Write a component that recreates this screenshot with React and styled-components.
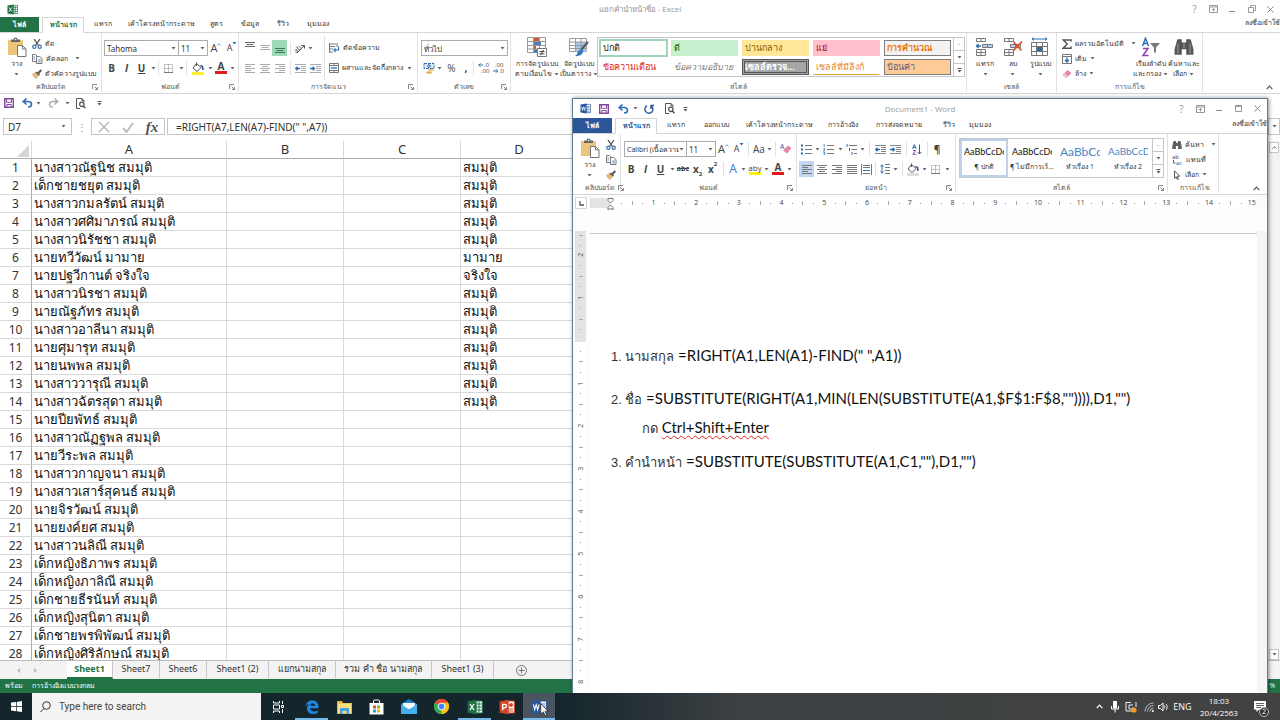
import React from 'react';
import styled, { createGlobalStyle, css } from 'styled-components';

const GlobalStyle = createGlobalStyle`
  * { box-sizing: border-box; }
  html, body { margin: 0; height: 100%; }
  body { font-family: "Open Sans", "Noto Sans", sans-serif; font-size: 7px; color: #333; background: #fff; overflow: hidden; }
  button, input, select { font: inherit; color: inherit; margin: 0; padding: 0; border: 0; background: none; outline: 0; }
  svg { display: block; flex: none; }
`;

const EXCEL = '#217346';
const WORD = '#2b579a';

/* ---------- icons ---------- */

const Svg = ({ w = 12, h = w, vw = w, vh = h, children }) => (
  <svg width={w} height={h} viewBox={`0 0 ${vw} ${vh}`} fill="none" stroke="#555" strokeWidth="1" aria-hidden="true">
    {children}
  </svg>
);

const Caret = ({ c = '#666' }) => (
  <svg width="5" height="3" viewBox="0 0 5 3" aria-hidden="true"><path d="M.5 0h4L2.5 2.6z" fill={c} /></svg>
);

const SaveIcon = () => (
  <Svg w={10}><path d="M.7.7h8.6v8.6H.7z" stroke="#80489f" strokeWidth="1.4" /><path d="M2.5 1v3.3h5V1M2.8 9V6.5h4.4V9" stroke="#80489f" /></Svg>
);
const UndoIcon = ({ c = '#2b6cb0' }) => (
  <Svg w={11} h={10}><path d="M4.5.5L1.2 3.5l3.3 3M1.5 3.5h4.7c2.2 0 3.3 1.2 3.3 2.8 0 1.500-1.200 2.700-3.500 2.700" stroke={c} strokeWidth="1.6" /></Svg>
);
const RedoIcon = ({ c = '#aaa' }) => (
  <Svg w={11} h={10}><path d="M6.500.5l3.300 3-3.300 3M9.500 3.500H4.800C2.600 3.500 1.500 4.700 1.500 6.300 1.500 7.800 2.700 9 5 9" stroke={c} strokeWidth="1.4" /></Svg>
);
const RepeatIcon = () => (
  <Svg w={10}><path d="M7.200 1.900A4 4 0 1 1 3 1.700M7 5V1.500h3" stroke="#2b579a" strokeWidth="1.400" /></Svg>
);
const PreviewIcon = () => (
  <Svg w={10} h={11}><path d="M4 10.500H.5V.5h5.500l2 2V4M6 .5v2.200h2" /><circle cx="5.800" cy="6.300" r="2.200" strokeWidth="1.300" /><path d="M7.400 8l2 2.300" strokeWidth="1.500" /></Svg>
);
const CustomizeIcon = () => (
  <Svg w={5} h={6}><path d="M.5 1.500h4" /><path d="M.5 3h4L2.500 5.500z" fill="#555" stroke="none" /></Svg>
);
const ExcelLogo = ({ s = 11 }) => (
  <Svg w={s} vw={24} vh={24}>
    <path d="M13 3h10v18H13z" fill="#fff" stroke="#217346" strokeWidth="1.500" />
    <path d="M14 7.500h8M14 12h8M14 16.500h8M18 4v16" stroke="#217346" strokeWidth="1.500" />
    <path d="M1 3.500L14.500 1v22L1 20.500z" fill="#217346" stroke="none" />
    <path d="M4.500 7.500l6 9M10.500 7.500l-6 9" stroke="#fff" strokeWidth="2" />
  </Svg>
);
const WordLogo = ({ s = 11 }) => (
  <Svg w={s} vw={24} vh={24}>
    <path d="M13 3h10v18H13z" fill="#fff" stroke="#2b579a" strokeWidth="1.500" />
    <path d="M14 7.500h7M14 11h7M14 14.500h7M14 18h7" stroke="#2b579a" strokeWidth="1.300" />
    <path d="M1 3.500L14.500 1v22L1 20.500z" fill="#2b579a" stroke="none" />
    <path d="M3.500 8l2 8 2.300-7.500L10 16l2-8" stroke="#fff" strokeWidth="1.700" />
  </Svg>
);
const PptLogo = ({ s = 18 }) => (
  <Svg w={s} vw={24} vh={24}>
    <path d="M13 3h10v18H13z" fill="#fff" stroke="#d24726" strokeWidth="1.500" />
    <circle cx="18" cy="9" r="3" fill="#d24726" stroke="none" /><path d="M14 15h7M14 18h7" stroke="#d24726" strokeWidth="1.500" />
    <path d="M1 3.500L14.500 1v22L1 20.500z" fill="#d24726" stroke="none" />
    <path d="M5.500 17V8h3a2.500 2.500 0 0 1 0 5.300h-3" stroke="#fff" strokeWidth="2" />
  </Svg>
);
const PasteIcon = () => (
  <Svg w={20} h={20}>
    <path d="M1 3h15v15H1z" fill="#ecc57b" stroke="none" />
    <path d="M4 5V2.500h2.500a2 2 0 0 1 4 0H13V5z" fill="#666" stroke="none" /><circle cx="8.500" cy="2.500" r=".8" fill="#fff" stroke="none" />
    <path d="M10.500 8.500h5l3.500 3.500v7.500h-8.500z" fill="#fff" stroke="#777" /><path d="M15.500 8.500V12H19" stroke="#777" />
  </Svg>
);
const CutIcon = () => (
  <Svg w={10}><path d="M2 0l4.500 6.500M8 0L3.500 6.500" stroke="#555" strokeWidth="1.300" /><circle cx="2.300" cy="7.800" r="1.600" stroke="#3a6ea5" strokeWidth="1.200" /><circle cx="7.700" cy="7.800" r="1.600" stroke="#3a6ea5" strokeWidth="1.200" /></Svg>
);
const CopyIcon = () => (
  <Svg w={11} h={10}><path d="M.5.5h3l2 2v5h-5z" fill="#fff" stroke="#777" /><path d="M4.500 2.500h3l2.500 2v5H4.500z" fill="#fff" stroke="#777" /><path d="M6 6h2.800M6 7.800h2.800M1.500 3h1.500M1.500 5h1.500" stroke="#3a6ea5" strokeWidth=".8" /></Svg>
);
const BrushIcon = () => (
  <Svg w={10}><path d="M0 5l4-2 3 3.500-3 3.500C2.500 9 1 7.500 0 5z" fill="#e3b873" stroke="none" /><path d="M3.500 3.500l3.500 3.300 1-1.300-3-3z" fill="#555" stroke="none" /><path d="M6.500 4L9.300 1" strokeWidth="2" /></Svg>
);
const BordersIcon = () => (
  <Svg w={9}><path d="M.5.5h8v8h-8zM4.500.5v8M.5 4.500h8" stroke="#888" strokeDasharray="1 1" /><path d="M0 8.500h9" stroke="#777" /></Svg>
);
const FillIcon = ({ bar = '#ffef33' }) => (
  <Svg w={12} h={13}><path d="M4.500 1.500l4.700 4L5 9.500 1 6z" fill="#fff" /><path d="M4.500 4V.5" /><path d="M8.500 3.500c2 0 2.500 1.500 2.300 4.500" stroke="#2b579a" strokeWidth="1.600" /><path d="M0 10h12v3H0z" fill={bar} stroke="none" /></Svg>
);
const lineSets = {
  left: [10, 6, 10, 6, 10], center: [10, 6, 10, 6, 10], right: [10, 6, 10, 6, 10], justify: [10, 10, 10, 10, 10],
};
const AlignIcon = ({ k = 'left', c = '#777' }) => (
  <Svg w={10} h={9}>{lineSets[k].map((n, i) => {
    const x = k === 'right' ? 10 - n : k === 'center' ? (10 - n) / 2 : 0;
    return <path key={i} d={`M${x} ${i * 2 + 0.5}h${n}`} stroke={c} />;
  })}</Svg>
);
const VAlignIcon = ({ at = 0, c = '#666' }) => (
  <Svg w={10} h={12}><path d={`M0 ${at + 0.5}h10M1.500 ${at + 2.5}h7M0 ${at + 4.5}h10`} stroke={c} /></Svg>
);
const OrientIcon = () => (
  <Svg w={12}><text x="-1" y="8" fontSize="7" fill="#444" stroke="none" transform="rotate(-45 5 6)">ab</text><path d="M3 11l7-7M10.500 6.500V3.500H7.500" /></Svg>
);
const IndentIcon = ({ out, c = '#888' }) => (
  <Svg w={11} h={9}><path d="M0 .5h11M6 2.500h5M6 4.500h5M6 6.500h5M0 8.500h11" stroke={c} /><path d={out ? 'M5 4.500H.8M2.500 2.700L.7 4.500l1.800 1.800' : 'M0 4.500h4.200M2.700 2.700l1.800 1.800-1.800 1.800'} stroke="#2b6cb0" strokeWidth="1.300" /></Svg>
);
const WrapIcon = () => (
  <Svg w={11} h={10}><path d="M.5 0v10M8 0v4M1 1h6M1 3.500h5M1 6h3M1 9h3" stroke="#777" /><path d="M5 7h4.500V3.500M6.500 5.300L5 7l1.500 1.800" stroke="#2b6cb0" strokeWidth="1.200" /></Svg>
);
const MergeIcon = () => (
  <Svg w={10}><path d="M.5.5h9v9h-9zM.5 2.500h9M.5 7.500h9M5 0v2.500M5 7.500v2.500" stroke="#777" /><path d="M2 5h6" stroke="#2b6cb0" strokeWidth="1.300" /></Svg>
);
const CurrencyIcon = () => (
  <Svg w={12}><path d="M1 1.500h10v5H1z" stroke="#2b6cb0" fill="#dce9f7" strokeDasharray="3 1" /><circle cx="6" cy="4" r="1.300" stroke="#2b6cb0" /><ellipse cx="8" cy="8" rx="3" ry="1.300" fill="#ecc57b" stroke="none" /><ellipse cx="6" cy="10.500" rx="3" ry="1.200" fill="#e0ac62" stroke="none" /></Svg>
);
const DecimalIcon = ({ more }) => (
  <Svg w={12}><text x={more ? 6 : 2} y="5" fontSize="6" fill="#444" stroke="none">{more ? '.0' : '.00'}</text><text x={more ? 3 : 6} y="11" fontSize="6" fill="#444" stroke="none">{more ? '.00' : '.0'}</text><path d={more ? 'M5 3H.8M2.500 1.300L.8 3l1.700 1.700' : 'M0 9h4.500M3 7.300L4.700 9 3 10.700'} stroke="#2b6cb0" /></Svg>
);
const CondIcon = () => (
  <Svg w={20} h={20}><path d="M.5.5h18v15H.5z" fill="#fff" stroke="#999" /><path d="M6.500.5v15M12.500.5v15M.5 4.500h18M.5 8.500h18M.5 12h18" stroke="#999" /><path d="M7 1h5v3H7zM7 9h2v3H7z" fill="#d9583b" stroke="none" /><path d="M7 5h7v3H7zM7 12.500h4v3H7z" fill="#4a7ebb" stroke="none" /><path d="M10.500 11.500h9v8h-9z" fill="#fff" stroke="#777" /><path d="M12.500 14.500h5M12.500 16.800h5M16.500 13l-3 5.300" stroke="#444" /></Svg>
);
const TableFmtIcon = () => (
  <Svg w={20} h={20}><path d="M.5 1.500h17v13H.5z" fill="#fff" stroke="#999" /><path d="M6.500 5h11v9.500h-11z" fill="#a9c9ea" stroke="none" /><path d="M6.500 1.500v13M12 1.500v13M.5 5h17M.5 8.500h17M.5 11.500h17" stroke="#999" /><path d="M19 5l-7 8" stroke="#555" strokeWidth="2" /><path d="M12.500 11.500l-4 3.500c0 2-1 3-2.500 4 3.500.6 7-.5 8.500-5z" fill="#3a78b8" stroke="none" /></Svg>
);
const CellsIcon = ({ k }) => (
  <Svg w={20} h={20}>
    {k === 'format' ? (
      <><path d="M1.500 5.500h16v13h-16z" fill="#fff" stroke="#777" /><path d="M6.500 5v14M12.500 5v14M1 9.500h17M1 14.500h17" stroke="#777" /><path d="M7 10h5v4H7z" fill="#2b6cb0" stroke="none" /><path d="M2 2h15M4 .5L2 2l2 1.500M15 .5L17 2l-2 1.500" stroke="#2b6cb0" /></>
    ) : (
      <><path d="M1.500 1.500h9v3h-9zM6 1.500v3M1.500 12.500h9v6h-9zM6 12.500v6M1.500 15.500h9" stroke="#777" /><path d="M7.500 7.500h10v3h-10zM12.500 7.500v3" fill="#b9d3ee" stroke="#777" /></>
    )}
    {k === 'insert' && <path d="M6 9H1.500M3.500 7L1.500 9l2 2" stroke="#2b6cb0" strokeWidth="1.400" />}
    {k === 'delete' && <path d="M10.500 5l8 8.500M19 4.500l-9 9.500" stroke="#d9532c" strokeWidth="1.800" />}
  </Svg>
);
const SumIcon = () => <Svg w={10}><path d="M9 2.500V1H1.200l4 4-4 4.200H9V7.500" strokeWidth="1.500" /></Svg>;
const FillDownIcon = () => <Svg w={10}><path d="M.5.5h9v9h-9zM.5 2.500h9" stroke="#777" /><path d="M5 3.500v4M3 6l2 2 2-2" stroke="#2b6cb0" strokeWidth="1.400" /></Svg>;
const EraserIcon = () => <Svg w={10}><path d="M5.500 1l4 3-5 5-4-3z" fill="#e8869d" stroke="none" /><path d="M2.500 4l4 3-2 2-4-3z" fill="#f3bdc9" stroke="none" /></Svg>;
const SortFilterIcon = () => (
  <Svg w={20} h={20}><path d="M1.500 9L4.500 1.200 7.500 9M2.500 6.500h4" stroke="#2b6cb0" strokeWidth="1.400" /><path d="M2 11.500h5L2 18.500h5.500" stroke="#8e44ad" strokeWidth="1.500" /><path d="M9 6h10l-4 4.500V15l-2 1v-5.500z" fill="#777" stroke="none" /></Svg>
);
const BinocularsIcon = ({ s = 18 }) => (
  <Svg w={s} vw={18} vh={18}><path d="M3 2h4v3h4V2h4l2.500 9v5H11v-5H7v5H.5v-5z" fill="#555" stroke="none" /><path d="M3.500 6v9M14.500 6v9M9 6v4" stroke="#999" /></Svg>
);
const ClearFmtIcon = () => <Svg w={12}><text x="0" y="6" fontSize="7" fill="#2b579a" stroke="none">A</text><path d="M8 2.500L11.500 5 7 10.500 3 7.500z" fill="#e8869d" stroke="none" /></Svg>;
const ListIcon = ({ k }) => (
  <Svg w={11} h={11}>
    {k === 'multi' ? <path d="M3 1.500h8M5.500 5.500H11M8 9.500h3" stroke="#777" /> : <path d="M4 1.500h7M4 5.500h7M4 9.500h7" stroke="#777" />}
    {k === 'bullet' && <path d="M0 1.500h2M0 5.500h2M0 9.500h2" stroke="#2b6cb0" strokeWidth="2" />}
    {k === 'number' && <path d="M1.200 0v3M.3 4.500h1.500v1.200L.3 7h1.700M.3 8.500h1.500v2.200H.3" stroke="#2b6cb0" strokeWidth=".8" />}
    {k === 'multi' && <path d="M1 0v3M3.500 4v3M6 8v3" stroke="#2b6cb0" />}
  </Svg>
);
const SortIcon = () => <Svg w={10} h={11}><path d="M.5 4.800L2.300.6l1.800 4.200M1 3.500h2.500" stroke="#2b6cb0" /><path d="M.8 6.500h3L.8 10.300h3.400" stroke="#8e44ad" /><path d="M7.500.5v9.500M5.500 8l2 2 2-2" /></Svg>;
const DistributeIcon = () => <Svg w={11}><path d="M.5 0v11M10.500 0v11M2 1.500h7M2 3.500h7M2 9.500h7" stroke="#777" /><path d="M2 6.500h7" stroke="#2b6cb0" /></Svg>;
const SpacingIcon = () => <Svg w={10}><path d="M5 .5h5M5 3.500h5M5 6.500h5M5 9.500h5" stroke="#777" /><path d="M2 .8v8.400M.5 2.500L2 .8l1.500 1.700M.5 7.500L2 9.200l1.500-1.700" stroke="#2b6cb0" /></Svg>;
const ReplaceIcon = () => <Svg w={11}><text x="0" y="5" fontSize="6" fill="#444" stroke="none">ab</text><text x="4" y="11" fontSize="6" fill="#2b579a" stroke="none">ac</text><path d="M1.500 6v3h2" stroke="#2b6cb0" /></Svg>;
const PointerIcon = () => <Svg w={10}><path d="M2.500.8l5.300 5.400H5.300L6.500 9 5.300 9.500 4.200 6.800 2.500 8.300z" fill="#fff" /></Svg>;
const LauncherIcon = () => <Svg w={6}><path d="M.5 5V.5H5M2.500 2.500l3 3M5.500 3v2.500H3" stroke="#888" /></Svg>;
const ChevronUp = ({ w = 7, c = '#555' }) => <Svg w={w} h={5} vw={7} vh={5}><path d="M.7 4.200l2.800-3 2.800 3" stroke={c} strokeWidth="1.200" /></Svg>;

/* ---------- shared parts ---------- */

const TitleBar = styled.header`
  flex: none; height: ${p => p.$h}px; display: grid; grid-template-columns: 1fr auto 1fr; align-items: center;
  font-size: 8px; color: #999;
`;
const QuickBar = styled.div`display: flex; align-items: center; height: 18px; padding-left: ${p => p.$pad}px;`;
const Captions = styled.div`display: flex; justify-content: flex-end;`;
const CaptionButton = styled.button`width: 19px; height: 14px; display: flex; align-items: center; justify-content: center; color: #999; font-size: 10px;`;
const TabBar = styled.nav`flex: none; height: 16px; display: flex; border-bottom: 1px solid #d5d5d5;`;
const FileTab = styled.button`width: ${p => p.$w}px; margin-right: 3px; background: ${p => p.$c}; color: #fff; font-weight: 600; line-height: 15px;`;
const Tab = styled.button`
  width: ${p => p.$w}px; height: 16px; line-height: 14px; white-space: nowrap; display: flex; justify-content: center;
  ${p => p.$on && css`color: ${p.$on}; background: #fff; border: 1px solid #d5d5d5; border-bottom-color: #fff; font-weight: 600;`}
`;
const SignIn = styled.a`margin-left: auto; color: #333; text-decoration: none; white-space: nowrap; line-height: 11px;`;
const Ribbon = styled.div`flex: none; height: 61px; display: flex; background: #fff; border-bottom: 1px solid #d5d5d5;`;
const GroupBox = styled.section`
  flex: none; width: ${p => p.$w}px; display: flex; flex-direction: column; border-right: 1px solid #e1e1e1; margin-bottom: 1px; white-space: nowrap;
`;
const GroupBody = styled.div`flex: 1; display: flex; min-height: 0; padding: 3px 2px 0 ${p => p.$pad ?? 3}px;`;
const GroupFoot = styled.footer`
  height: 11px; display: grid; grid-template-columns: 12px 1fr 12px; align-items: center; justify-items: center; line-height: 10px; color: #555;
`;
const LauncherButton = styled.button`display: flex;`;
const Collapse = styled.div`flex: 1; display: flex; align-items: flex-end; justify-content: flex-end; padding: 0 7px 3px 0;`;
const Rows = styled.div`display: flex; flex-direction: column; gap: 4px; padding-top: 4px; width: ${p => (p.$w ? p.$w + 'px' : 'auto')};`;
const Row = styled.div`display: flex; align-items: center; height: 16px;`;
const Stack = styled.div`display: flex; flex-direction: column; align-items: flex-start; width: ${p => (p.$w ? p.$w + 'px' : 'auto')};`;
const Tool = styled.button`
  flex: none; width: ${p => p.$w}px; height: ${p => p.$h ?? 16}px; display: flex; align-items: center; justify-content: center; line-height: 12px;
  font-size: ${p => p.$size ?? 10}px; font-weight: ${p => (p.$bold ? 700 : 400)}; color: ${p => p.$color ?? '#444'};
  font-style: ${p => (p.$italic ? 'italic' : 'normal')}; text-decoration: ${p => p.$deco ?? 'none'}; background: ${p => p.$bg ?? 'none'};
`;
const Sep = styled.span`flex: none; width: 1px; height: ${p => p.$h ?? 14}px; margin: 0 ${p => p.$r ?? 2}px 0 ${p => p.$l ?? 3}px; background: #e1e1e1;`;
const LabelButton = styled.button`height: 15px; display: flex; align-items: center; gap: 3px; padding-left: 1px; white-space: nowrap; line-height: 12px;`;
const BigButton = styled.button`
  flex: none; width: ${p => p.$w}px; height: 45px; display: flex; flex-direction: column; align-items: center; padding-top: 1px; line-height: 10px; white-space: nowrap;
`;
const BigLine = styled.span`display: flex; align-items: center; gap: 2px; height: 10px; &:first-of-type { margin-top: 2px; }`;
const ComboBox = styled.label`
  flex: none; width: ${p => p.$w}px; height: 16px; display: flex; align-items: center; padding: 0 2px; border: 1px solid #ababab; margin-right: -1px; background: #fff;
  font-size: ${p => p.$size ?? 8}px; font-family: "Noto Sans", sans-serif;
  select { flex: 1; min-width: 0; appearance: none; line-height: 13px; }
`;
const FontA = styled.span`display: inline-flex; flex-direction: column; align-items: center; line-height: 9px; border-bottom: 3px solid #e01b1b; width: 12px; font-weight: 700;`;
const HighlightMark = styled(FontA)`border-color: #fff100; font-size: 8px; font-weight: 400;`;
const Sized = styled.span`font-size: ${p => p.$s}px; display: flex; align-items: flex-start;`;
const Script = styled.small`font-size: 6px; line-height: 6px; align-self: ${p => (p.$up ? 'flex-start' : 'flex-end')};`;

const Drop = ({ w, label = 'ตัวเลือก' }) => <Tool $w={w} aria-label={label}><Caret /></Tool>;
const Combo = ({ w, value, label, size }) => (
  <ComboBox $w={w} $size={size}><select aria-label={label} defaultValue={value}><option>{value}</option></select><Caret /></ComboBox>
);
const Group = ({ w, name, pad, launcher, children }) => (
  <GroupBox $w={w}>
    <GroupBody $pad={pad}>{children}</GroupBody>
    <GroupFoot><span /><span>{name}</span>{launcher ? <LauncherButton aria-label={name}><LauncherIcon /></LauncherButton> : <span />}</GroupFoot>
  </GroupBox>
);
const Big = ({ w, icon, lines }) => (
  <BigButton $w={w}>{icon}{lines.map((l, i) => <BigLine key={i}>{l}{i === lines.length - 1 && <Caret />}</BigLine>)}</BigButton>
);
const GrowShrink = ({ a, b }) => (
  <>
    <Tool $w={a} aria-label="เพิ่มขนาด"><Sized $s={11}>A<ChevronUp w={4} c="#2b6cb0" /></Sized></Tool>
    <Tool $w={b} aria-label="ลดขนาด"><Sized $s={9}>A<Caret c="#2b6cb0" /></Sized></Tool>
  </>
);
const WindowButtons = ({ restore }) => (
  <Captions>
    <CaptionButton aria-label="วิธีใช้">?</CaptionButton>
    <CaptionButton aria-label="ตัวเลือก Ribbon"><Svg w={9} h={8}><path d="M.5.5h8v7h-8zM.5 2h8M4.500 6.500V3.500M3 5l1.500-1.500L6 5" stroke="#999" /></Svg></CaptionButton>
    <CaptionButton aria-label="ย่อ"><Svg w={7} h={7}><path d="M0 5.500h6" stroke="#888" /></Svg></CaptionButton>
    <CaptionButton aria-label="ขยาย"><Svg w={8} h={8}><path d={restore ? 'M.5 2.500h5v5h-5zM2.500 2.500v-2h5v5h-2' : 'M.5.5h6v6h-6zM.5 1.500h6'} stroke="#999" /></Svg></CaptionButton>
    <CaptionButton aria-label="ปิด"><Svg w={7}><path d="M.5.5l6 6M6.500.5l-6 6" stroke="#888" /></Svg></CaptionButton>
  </Captions>
);

/* ---------- gallery ---------- */

const Gallery = styled.div`display: flex; height: 40px; margin-top: 1px; border: 1px solid #c6c6c6;`;
const SwatchGrid = styled.div`display: grid; grid-template-columns: repeat(5, 67px); grid-template-rows: 16px 16px; gap: 3px 4px; align-content: center; padding: 0 2px;`;
const Swatch = styled.button`
  display: block; padding: 0 2px; text-align: left; white-space: nowrap; font-size: 9px; line-height: 14px; background: ${p => p.$bg ?? '#fff'}; color: ${p => p.$c ?? '#222'};
  font-weight: ${p => (p.$b ? 700 : 400)}; font-style: ${p => (p.$i ? 'italic' : 'normal')}; border: 1px solid ${p => p.$bd ?? p.$bg ?? 'transparent'};
  ${p => p.$sel && css`box-shadow: 0 0 0 1px #9fd5b7;`}
  ${p => p.$double && css`box-shadow: inset 0 0 0 1px #a5a5a5, inset 0 0 0 2px #555;`}
  ${p => p.$under && css`border-bottom-color: ${p.$under};`}
`;
const Scroller = styled.div`width: 11px; display: flex; flex-direction: column; border-left: 1px solid #c6c6c6; button { flex: 1; display: flex; align-items: center; justify-content: center; } button + button { border-top: 1px solid #c6c6c6; }`;
const GalleryScroll = () => (
  <Scroller><button aria-label="ขึ้น"><ChevronUp w={4} c="#bbb" /></button><button aria-label="ลง"><Caret /></button><button aria-label="เพิ่มเติม"><CustomizeIcon /></button></Scroller>
);
const StyleCard = styled.button`
  width: 48px; height: 38px; border: 2px solid ${p => (p.$on ? '#bdd0ee' : 'transparent')}; display: flex; flex-direction: column; align-items: center; justify-content: center; gap: 3px; white-space: nowrap;
`;
const Sample = styled.span`width: 40px; overflow: hidden; text-align: left; font-family: Lato, sans-serif; line-height: 13px; font-size: ${p => p.$s ?? 9}px; color: ${p => p.$c ?? '#111'};`;
const CardName = styled.span`line-height: 11px;`;

const swatches = [
  { t: 'ปกติ', bd: '#9fd5b7', sel: 1 }, { t: 'ดี', bg: '#c6efce', c: '#0b6b12' }, { t: 'ปานกลาง', bg: '#ffe699', c: '#8a6100' }, { t: 'แย่', bg: '#ffc0cb', c: '#9c0006' },
  { t: 'การคำนวณ', bg: '#f2f2f2', c: '#e97a14', b: 1, bd: '#7f7f7f' }, { t: 'ข้อความเตือน', c: '#e02020' }, { t: 'ข้อความอธิบาย', c: '#7f7f7f', i: 1 },
  { t: 'เซลล์ตรวจ...', bg: '#a5a5a5', c: '#fff', b: 1, bd: '#555', double: 1 }, { t: 'เซลล์ที่มีลิงก์', c: '#e98a1c', under: '#e0a03c' }, { t: 'ป้อนค่า', bg: '#ffcc99', c: '#5a5a7d', bd: '#7f7f7f' },
];

/* ---------- excel ---------- */

const Screen = styled.div`height: 100vh; display: flex; flex-direction: column;`;
const Desktop = styled.main`flex: 1; min-height: 0; position: relative; display: flex; flex-direction: column; overflow: hidden;`;
const Spacer = styled.div`flex: none; height: 6px;`;
const FormulaBar = styled.div`flex: none; height: 23px; display: flex; align-items: flex-start; padding: 0 0 0 3px; font-family: "Noto Sans", sans-serif; font-size: 10px;`;
const NameBox = styled.label`width: 69px; height: 17px; border: 1px solid #c6c6c6; display: flex; align-items: center; padding: 0 5px 0 4px; input { flex: 1; min-width: 0; }`;
const Grip = styled.span`width: 19px; height: 17px; display: flex; align-items: center; justify-content: center; color: #888;`;
const FormulaTools = styled.div`width: 74px; height: 17px; border: 1px solid #c6c6c6; display: flex; align-items: center;`;
const FormulaField = styled.label`flex: 1; min-width: 0; height: 17px; display: flex; border: 1px solid #c6c6c6; margin-left: 2px; padding-left: 8px; input { flex: 1; min-width: 0; }`;
const ExpandButton = styled.button`width: 12px; height: 17px; display: flex; align-items: center; justify-content: center; border: 1px solid #c6c6c6;`;
const Fx = styled.i`font-family: "Liberation Serif", serif; font-size: 15px; font-weight: 700; color: #555;`;
const SheetArea = styled.div`flex: 1; min-height: 0; display: flex; overflow: hidden;`;
const GridClip = styled.div`flex: 1; min-width: 0; overflow: hidden;`;
const Grid = styled.table`
  width: 100%; table-layout: fixed; border-collapse: separate; border-spacing: 0; font-family: "Noto Sans", sans-serif; color: #111;
  th { font-weight: 400; height: 18px; padding: 0; font-size: 12px; line-height: 17px; color: #333; border-right: 1px solid #d9d9d9; border-bottom: 1px solid #d9d9d9; text-align: center; }
  thead th { font-size: 13px; border-bottom-color: #ababab; }
  tbody th { border-right-color: #ababab; }
  td { height: 18px; padding: 0 2px; font-size: 13px; line-height: 17px; white-space: nowrap; overflow: hidden; border-right: 1px solid #d9d9d9; border-bottom: 1px solid #d9d9d9; }
`;
const CornerIcon = styled.th`svg { margin: 3px 2px 0 auto; }`;
const VScroll = styled.div`width: 12px; background: #f3f3f3; display: flex; flex-direction: column; justify-content: space-between; padding: 1px 1px 0; button { height: 11px; border: 1px solid #c6c6c6; background: #fff; display: flex; align-items: center; justify-content: center; }`;
const SheetTabs = styled.nav`flex: none; height: 19px; display: flex; align-items: stretch; background: #f3f3f3; border-top: 1px solid #bbb; font-family: "Noto Sans", sans-serif; font-size: 9px;`;
const TabArrows = styled.div`width: 67px; display: flex; align-items: center; gap: 14px; padding-left: 17px;`;
const SheetTab = styled.button`
  width: ${p => p.$w}px; white-space: nowrap; line-height: 14px; padding-bottom: 1px; display: flex; justify-content: center; align-items: center; border-right: 1px solid #c6c6c6; border-bottom: 2px solid transparent;
  ${p => p.$on && css`background: #fff; color: ${EXCEL}; font-weight: 700; border-bottom-color: ${EXCEL};`}
`;
const AddSheet = styled.button`width: 54px; display: flex; align-items: center; justify-content: center;`;
const StatusBar = styled.footer`flex: none; height: 14px; background: ${EXCEL}; color: #fff; display: flex; align-items: center; gap: 9px; padding: 0 5px; line-height: 12px; span:last-child { margin-left: auto; }`;

const names = [
  ['นางสาวณัฐนิช สมมุติ', 'สมมุติ'], ['เด็กชายชยุต สมมุติ', 'สมมุติ'], ['นางสาวกมลรัตน์ สมมุติ', 'สมมุติ'], ['นางสาวศศิมาภรณ์ สมมุติ', 'สมมุติ'],
  ['นางสาวนิรัชชา สมมุติ', 'สมมุติ'], ['นายทวีวัฒน์ มามาย', 'มามาย'], ['นายปฐวีกานต์ จริงใจ', 'จริงใจ'], ['นางสาวนิรชา สมมุติ', 'สมมุติ'],
  ['นายณัฐภัทร สมมุติ', 'สมมุติ'], ['นางสาวอาลีนา สมมุติ', 'สมมุติ'], ['นายศุมารุท สมมุติ', 'สมมุติ'], ['นายนพพล สมมุติ', 'สมมุติ'],
  ['นางสาววารุณี สมมุติ', 'สมมุติ'], ['นางสาวฉัตรสุดา สมมุติ', 'สมมุติ'], ['นายปียพัทธ์ สมมุติ'], ['นางสาวณัฏฐพล สมมุติ'], ['นายวีระพล สมมุติ'],
  ['นางสาวกาญจนา สมมุติ'], ['นางสาวเสาร์สุคนธ์ สมมุติ'], ['นายจิรวัฒน์ สมมุติ'], ['นายยงค์ยศ สมมุติ'], ['นางสาวนลิณี สมมุติ'],
  ['เด็กหญิงธิภาพร สมมุติ'], ['เด็กหญิงภาลิณี สมมุติ'], ['เด็กชายธีรนันท์ สมมุติ'], ['เด็กหญิงสุนิตา สมมุติ'], ['เด็กชายพรพิพัฒน์ สมมุติ'], ['เด็กหญิงศิริลักษณ์ สมมุติ'],
];
const sheets = [['Sheet1', 46], ['Sheet7', 47], ['Sheet6', 47], ['Sheet1 (2)', 62], ['แยกนามสกุล', 67], ['รวม คำ ชื่อ นามสกุล', 96], ['Sheet1 (3)', 62]];

const ExcelRibbon = () => (
  <Ribbon>
    <Group w={102} name="คลิปบอร์ด" pad={2} launcher>
      <Big w={29} icon={<PasteIcon />} lines={['วาง', '']} />
      <Stack>
        <LabelButton><CutIcon />ตัด</LabelButton>
        <LabelButton><CopyIcon />คัดลอก&nbsp;&nbsp;<Caret /></LabelButton>
        <LabelButton><BrushIcon />ตัวคัดวางรูปแบบ</LabelButton>
      </Stack>
    </Group>
    <Group w={137} name="ฟอนต์" pad={2} launcher>
      <Rows>
        <Row><Combo w={75} value="Tahoma" label="ฟอนต์" /><Combo w={30} value="11" label="ขนาดฟอนต์" /><GrowShrink a={18} b={14} /></Row>
        <Row>
          <Tool $w={15} $bold>B</Tool><Tool $w={15} $italic $bold>I</Tool><Tool $w={15} $bold $deco="underline">U</Tool><Drop w={8} /><Sep $l={1} $r={1} />
          <Tool $w={17} aria-label="เส้นขอบ"><BordersIcon /></Tool><Drop w={8} /><Sep $l={1} $r={1} />
          <Tool $w={19} aria-label="สีเติม"><FillIcon /></Tool><Drop w={6} /><Tool $w={16} aria-label="สีฟอนต์"><FontA>A</FontA></Tool><Drop w={7} />
        </Row>
      </Rows>
    </Group>
    <Group w={179} name="การจัดแนว" launcher>
      <Rows $w={83}>
        <Row>
          <Tool $w={15} aria-label="ชิดบน"><VAlignIcon /></Tool><Tool $w={15} aria-label="กึ่งกลาง"><VAlignIcon at={3} c="#aaa" /></Tool><Tool $w={15} $bg="#9fd8b8" aria-label="ชิดล่าง"><VAlignIcon at={6} c="#3b7557" /></Tool>
          <Sep /><Tool $w={14} aria-label="การวางแนว"><OrientIcon /></Tool><Drop w={6} />
        </Row>
        <Row>
          <Tool $w={15} aria-label="ซ้าย"><AlignIcon c="#aaa" /></Tool><Tool $w={15} aria-label="กลาง"><AlignIcon k="center" c="#aaa" /></Tool><Tool $w={15} aria-label="ขวา"><AlignIcon k="right" c="#aaa" /></Tool>
          <Sep /><Tool $w={14} aria-label="ลดการเยื้อง"><IndentIcon out c="#aaa" /></Tool><Tool $w={16} aria-label="เพิ่มการเยื้อง"><IndentIcon c="#aaa" /></Tool>
        </Row>
      </Rows>
      <Sep $h={44} $l={0} $r={3} />
      <Rows>
        <Row><LabelButton><WrapIcon />ตัดข้อความ</LabelButton></Row>
        <Row><LabelButton><MergeIcon />ผสานและจัดกึ่งกลาง</LabelButton><Drop w={12} /></Row>
      </Rows>
    </Group>
    <Group w={93} name="ตัวเลข" launcher>
      <Rows>
        <Row><Combo w={87} value="ทั่วไป" label="รูปแบบตัวเลข" /></Row>
        <Row><Tool $w={15} aria-label="สกุลเงิน"><CurrencyIcon /></Tool><Drop w={7} /><Tool $w={17}>%</Tool><Tool $w={12} $bold>,</Tool><Sep $l={1} /><Tool $w={16} aria-label="เพิ่มทศนิยม"><DecimalIcon more /></Tool><Tool $w={14} aria-label="ลดทศนิยม"><DecimalIcon /></Tool></Row>
      </Rows>
    </Group>
    <Group w={456} name="สไตล์">
      <Big w={46} icon={<CondIcon />} lines={['การจัดรูปแบบ', 'ตามเงื่อนไข']} /><Big w={37} icon={<TableFmtIcon />} lines={['จัดรูปแบบ', 'เป็นตาราง']} />
      <Gallery>
        <SwatchGrid>{swatches.map(s => <Swatch key={s.t} $bg={s.bg} $c={s.c} $b={s.b} $i={s.i} $bd={s.bd} $sel={s.sel} $double={s.double} $under={s.under}>{s.t}</Swatch>)}</SwatchGrid>
        <GalleryScroll />
      </Gallery>
    </Group>
    <Group w={90} name="เซลล์" pad={4}>
      <Big w={28} icon={<CellsIcon k="insert" />} lines={['แทรก', '']} /><Big w={27} icon={<CellsIcon k="delete" />} lines={['ลบ', '']} /><Big w={28} icon={<CellsIcon k="format" />} lines={['รูปแบบ', '']} />
    </Group>
    <Group w={146} name="การแก้ไข" pad={4}>
      <Stack $w={73}>
        <LabelButton><SumIcon />ผลรวมอัตโนมัติ&nbsp;&nbsp;<Caret /></LabelButton>
        <LabelButton><FillDownIcon />เติม <Caret /></LabelButton>
        <LabelButton><EraserIcon />ล้าง <Caret /></LabelButton>
      </Stack>
      <Big w={33} icon={<SortFilterIcon />} lines={['เรียงลำดับ', 'และกรอง']} /><Big w={33} icon={<BinocularsIcon s={20} />} lines={['ค้นหาและ', 'เลือก']} />
    </Group>
    <Collapse><ChevronUp /></Collapse>
  </Ribbon>
);

const Excel = () => (
  <>
    <TitleBar $h={17}><QuickBar $pad={7}><ExcelLogo /></QuickBar><span>แยกคำนำหน้าชื่อ - Excel</span><WindowButtons restore /></TitleBar>
    <TabBar>
      <FileTab $w={39} $c={EXCEL}>ไฟล์</FileTab><Tab $w={42} $on={EXCEL}>หน้าแรก</Tab><Tab $w={38}>แทรก</Tab><Tab $w={78}>เค้าโครงหน้ากระดาษ</Tab><Tab $w={32}>สูตร</Tab><Tab $w={36}>ข้อมูล</Tab><Tab $w={30}>รีวิว</Tab><Tab $w={40}>มุมมอง</Tab>
      <SignIn href="#">ลงชื่อเข้าใช้</SignIn>
    </TabBar>
    <ExcelRibbon />
    <QuickBar $pad={0}>
      <Tool $w={18} aria-label="บันทึก"><SaveIcon /></Tool><Tool $w={18} aria-label="เลิกทำ"><UndoIcon /></Tool><Drop w={5} /><Tool $w={24} aria-label="ทำซ้ำ"><RedoIcon /></Tool><Drop w={4} /><Tool $w={24} aria-label="ตัวอย่าง"><PreviewIcon /></Tool><Tool $w={13} aria-label="กำหนดเอง"><CustomizeIcon /></Tool>
    </QuickBar>
    <Spacer />
    <FormulaBar>
      <NameBox><input aria-label="กล่องชื่อ" defaultValue="D7" /><Caret /></NameBox><Grip>⋮</Grip>
      <FormulaTools>
        <Tool $w={24} aria-label="ยกเลิก"><Svg w={12}><path d="M1 1l10 10M11 1L1 11" stroke="#bbb" strokeWidth="1.600" /></Svg></Tool>
        <Tool $w={24} aria-label="ป้อน"><Svg w={12}><path d="M1 7l3.500 4L11 2" stroke="#bbb" strokeWidth="2" /></Svg></Tool>
        <Tool $w={24} aria-label="แทรกฟังก์ชัน"><Fx>fx</Fx></Tool>
      </FormulaTools>
      <FormulaField><input aria-label="แถบสูตร" defaultValue={'=RIGHT(A7,LEN(A7)-FIND(" ",A7))'} /></FormulaField>
      <ExpandButton aria-label="ขยายแถบสูตร"><Caret /></ExpandButton>
    </FormulaBar>
    <SheetArea>
      <GridClip>
        <Grid>
          <colgroup><col width="32" /><col width="195" /><col width="117" /><col width="117" /><col width="117" /><col /></colgroup>
          <thead><tr><CornerIcon scope="col" aria-label="เลือกทั้งหมด"><Svg w={12}><path d="M12 0v12H0z" fill="#d5d5d5" stroke="none" /></Svg></CornerIcon>{['A', 'B', 'C', 'D', 'E'].map(c => <th key={c} scope="col">{c}</th>)}</tr></thead>
          <tbody>{names.map(([a, d], i) => <tr key={i}><th scope="row">{i + 1}</th><td>{a}</td><td /><td /><td>{d}</td><td /></tr>)}</tbody>
        </Grid>
      </GridClip>
      <VScroll><button aria-label="เลื่อนขึ้น"><ChevronUp w={5} /></button><button aria-label="เลื่อนลง"><Caret /></button></VScroll>
    </SheetArea>
    <SheetTabs>
      <TabArrows><Svg w={3} h={5}><path d="M3 0v5L0 2.500z" fill="#bbb" stroke="none" /></Svg><Svg w={3} h={5}><path d="M0 0v5l3-2.500z" fill="#bbb" stroke="none" /></Svg></TabArrows>
      {sheets.map(([n, w], i) => <SheetTab key={n} $w={w} $on={i === 0}>{n}</SheetTab>)}
      <AddSheet aria-label="แผ่นงานใหม่"><Svg w={11}><circle cx="5.500" cy="5.500" r="5" stroke="#777" /><path d="M5.500 2.500v6M2.500 5.500h6" stroke="#777" /></Svg></AddSheet>
    </SheetTabs>
    <StatusBar><span>พร้อม</span><span>การอ้างอิงแบบวงกลม</span><span>%</span></StatusBar>
  </>
);

/* ---------- word ---------- */

const WordWindow = styled.section`
  position: absolute; left: 572px; right: 12px; top: 98px; bottom: 0; display: flex; flex-direction: column; background: #fff; border: 1px solid #5f7d93; border-bottom: 0; box-shadow: 1px 0 4px rgba(0,0,0,.45);
`;
const RulerRow = styled.div`flex: none; height: 14px; margin-top: 1px; display: flex; align-items: center; background: #fbfbfb; padding-right: 10px;`;
const TabStop = styled.button`width: 12px; height: 12px; margin: 0 3px 0 2px; border: 1px solid #d5d5d5; background: #fff; display: flex; align-items: center; justify-content: center;`;
const RulerMargin = styled.div`width: 26px; height: 10px; background: linear-gradient(90deg, #e3e3e3 21px, #fff 21px); display: flex; justify-content: flex-end; align-items: flex-start; padding-right: 2px;`;
const RulerScale = styled.div`flex: 1; display: flex; background: #fff; height: 10px; color: #444;`;
const RulerUnit = styled.div`flex: 1; display: flex; flex-direction: ${p => (p.$v ? 'column' : 'row')};`;
const Tick = styled.span`
  flex: 1 1 0; min-width: 0; min-height: 0; display: flex; align-items: center; justify-content: center; line-height: 8px; overflow: visible;
  &::before { content: ""; ${p => (p.$dot ? 'width: 1px; height: 1px; background: #999;' : p.$mark ? (p.$v ? 'width: 4px; height: 1px; background: #aaa;' : 'width: 1px; height: 4px; background: #aaa;') : '')} }
  ${p => p.$v && p.$num && css`writing-mode: vertical-rl; transform: rotate(180deg);`}
`;
const Doc = styled.div`flex: 1; min-height: 0; display: flex; background: #fdfdfd; overflow: hidden; padding-top: 21px;`;
const VRuler = styled.div`width: 11px; margin-left: 2px; display: grid; grid-template-rows: 29px; grid-auto-rows: 43px 43px 42px; align-content: start; color: #555; overflow: hidden; background: linear-gradient(#e3e3e3 111px, #fff 111px);`;
const Page = styled.article`
  flex: 1; margin: 2px 0 0 4px; background: #fff; border-top: 1px solid #c6c6c6; padding: 107px 20px 0 21px; font-family: Lato, sans-serif; font-size: 15px; line-height: 28px; color: #111;
  p { margin: 0; white-space: nowrap; }
`;
const ListLine = styled.p`padding-top: ${p => p.$gap}px;`;
const SubLine = styled.p`padding-left: 31px; padding-top: 1px;`;
const Thai = styled.span`font-family: "Liberation Sans", sans-serif; font-size: 13px; line-height: 20px; color: #333;`;
const Misspelt = styled.span`text-decoration: underline wavy #e02020 1px; text-underline-offset: 2px;`;
const DocScroll = styled.div`width: 10px; background: #f5f5f5;`;

const Unit = ({ n, v, short }) => <RulerUnit $v={v}>{!short && <Tick $dot $v={v} />}<Tick $mark $v={v} /><Tick $dot $v={v} /><Tick $num $v={v}>{n}</Tick></RulerUnit>;

const WordRibbon = () => (
  <Ribbon>
    <Group w={48} name="คลิปบอร์ด" launcher pad={2}>
      <Big w={29} icon={<PasteIcon />} lines={['วาง', '']} />
      <Stack><Tool $w={14} $h={15} aria-label="ตัด"><CutIcon /></Tool><Tool $w={14} $h={15} aria-label="คัดลอก"><CopyIcon /></Tool><Tool $w={14} $h={15} aria-label="ตัวคัดวางรูปแบบ"><BrushIcon /></Tool></Stack>
    </Group>
    <Group w={176} name="ฟอนต์" launcher>
      <Rows>
        <Row><Combo w={63} value="Calibri (เนื้อความ" label="ฟอนต์" size={7} /><Combo w={30} value="11" label="ขนาดฟอนต์" /><GrowShrink a={17} b={14} /><Sep $l={2} /><Tool $w={16}>Aa</Tool><Drop w={5} /><Sep /><Tool $w={16} aria-label="ล้างการจัดรูปแบบ"><ClearFmtIcon /></Tool></Row>
        <Row>
          <Tool $w={14} $bold>B</Tool><Tool $w={15} $italic $bold>I</Tool><Tool $w={15} $bold $deco="underline">U</Tool><Drop w={8} /><Tool $w={14} $size={7} $bold $deco="line-through">abc</Tool>
          <Tool $w={15} $bold>x<Script>2</Script></Tool><Tool $w={15} $bold>x<Script $up>2</Script></Tool><Sep />
          <Tool $w={14} $size={12} $color="#3a78c8">A</Tool><Drop w={7} /><Tool $w={16} aria-label="สีเน้นข้อความ"><HighlightMark>aby</HighlightMark></Tool><Drop w={7} /><Tool $w={16} aria-label="สีฟอนต์"><FontA>A</FontA></Tool><Drop w={7} />
        </Row>
      </Rows>
    </Group>
    <Group w={159} name="ย่อหน้า" launcher pad={2}>
      <Rows>
        <Row>
          <Tool $w={15} aria-label="สัญลักษณ์"><ListIcon k="bullet" /></Tool><Drop w={6} /><Tool $w={17} aria-label="ลำดับเลข"><ListIcon k="number" /></Tool><Drop w={7} /><Tool $w={15} aria-label="หลายระดับ"><ListIcon k="multi" /></Tool><Drop w={6} /><Sep $l={4} $r={3} />
          <Tool $w={15} aria-label="ลดการเยื้อง"><IndentIcon out /></Tool><Tool $w={15} aria-label="เพิ่มการเยื้อง"><IndentIcon /></Tool><Sep /><Tool $w={15} aria-label="เรียงลำดับ"><SortIcon /></Tool><Sep /><Tool $w={14} $bold>¶</Tool>
        </Row>
        <Row>
          <Tool $w={15} $bg="#c2d5f2" aria-label="ซ้าย"><AlignIcon /></Tool><Tool $w={15} aria-label="กลาง"><AlignIcon k="center" /></Tool><Tool $w={15} aria-label="ขวา"><AlignIcon k="right" /></Tool><Tool $w={15} aria-label="เต็มแนว"><AlignIcon k="justify" /></Tool><Tool $w={15} aria-label="กระจาย"><DistributeIcon /></Tool><Sep $l={1} />
          <Tool $w={14} aria-label="ระยะห่าง"><SpacingIcon /></Tool><Drop w={7} /><Sep /><Tool $w={16} aria-label="แรเงา"><FillIcon bar="#ddd" /></Tool><Drop w={6} /><Tool $w={16} aria-label="เส้นขอบ"><BordersIcon /></Tool><Drop w={8} />
        </Row>
      </Rows>
    </Group>
    <Group w={212} name="สไตล์" launcher>
      <Gallery>
        <StyleCard $on><Sample>AaBbCcDc</Sample><CardName>¶ ปกติ</CardName></StyleCard>
        <StyleCard><Sample>AaBbCcDc</Sample><CardName>¶ ไม่มีการเว้...</CardName></StyleCard>
        <StyleCard><Sample $s={12} $c="#4a86c0">AaBbCc</Sample><CardName>หัวเรื่อง 1</CardName></StyleCard>
        <StyleCard><Sample $s={10} $c="#4a86c0">AaBbCcD</Sample><CardName>หัวเรื่อง 2</CardName></StyleCard>
        <GalleryScroll />
      </Gallery>
    </Group>
    <Group w={51} name="การแก้ไข">
      <Stack>
        <LabelButton><BinocularsIcon s={10} />ค้นหา&nbsp;&nbsp;<Caret /></LabelButton><LabelButton><ReplaceIcon />แทนที่</LabelButton><LabelButton><PointerIcon />เลือก <Caret /></LabelButton>
      </Stack>
    </Group>
    <Collapse><ChevronUp /></Collapse>
  </Ribbon>
);

const Word = () => (
  <WordWindow>
    <TitleBar $h={19}>
      <QuickBar $pad={3}>
        <Tool $w={18} aria-label="Word"><WordLogo /></Tool><Tool $w={20} aria-label="บันทึก"><SaveIcon /></Tool><Tool $w={19} aria-label="เลิกทำ"><UndoIcon /></Tool><Drop w={4} /><Tool $w={24} aria-label="ทำซ้ำ"><RepeatIcon /></Tool><Tool $w={18} aria-label="ตัวอย่าง"><PreviewIcon /></Tool><Tool $w={12} aria-label="กำหนดเอง"><CustomizeIcon /></Tool>
      </QuickBar>
      <span>Document1 - Word</span><WindowButtons />
    </TitleBar>
    <TabBar>
      <FileTab $w={39} $c={WORD}>ไฟล์</FileTab><Tab $w={42} $on={WORD}>หน้าแรก</Tab><Tab $w={38}>แทรก</Tab><Tab $w={42}>ออกแบบ</Tab><Tab $w={84}>เค้าโครงหน้ากระดาษ</Tab><Tab $w={44}>การอ้างอิง</Tab><Tab $w={68}>การส่งจดหมาย</Tab><Tab $w={32}>รีวิว</Tab><Tab $w={30}>มุมมอง</Tab>
      <SignIn href="#">ลงชื่อเข้าใช้</SignIn>
    </TabBar>
    <WordRibbon />
    <RulerRow>
      <TabStop aria-label="แท็บ"><Svg w={5}><path d="M1 0v4h4" strokeWidth="1.300" /></Svg></TabStop>
      <RulerMargin><Svg w={7} h={15}><path d="M1 .5h5v2L3.500 5 1 2.500zM3.500 7L6 9.500v5H1v-5zM1 11h5" stroke="#777" fill="#fff" /></Svg></RulerMargin>
      <RulerScale>{Array.from({ length: 15 }, (_, i) => <Unit key={i} n={i + 1} />)}</RulerScale>
    </RulerRow>
    <Doc>
      <VRuler>{['2', '1', '', '1', '2', '3', '4', '5', '6', '7', '8'].map((n, i) => <Unit key={i} n={n} v short={i === 0} />)}</VRuler>
      <Page>
        <p><Thai>1. นามสกุล </Thai>=RIGHT(A1,LEN(A1)-FIND(" ",A1))</p>
        <ListLine $gap={15}><Thai>2. ชื่อ </Thai>=SUBSTITUTE(RIGHT(A1,MIN(LEN(SUBSTITUTE(A1,$F$1:F$8,"")))),D1,"")</ListLine>
        <SubLine><Thai>กด </Thai><Misspelt>Ctrl+Shift+Enter</Misspelt></SubLine>
        <ListLine $gap={6}><Thai>3. คำนำหน้า </Thai>=SUBSTITUTE(SUBSTITUTE(A1,C1,""),D1,"")</ListLine>
      </Page>
      <DocScroll />
    </Doc>
  </WordWindow>
);

/* ---------- taskbar ---------- */

const Taskbar = styled.nav`flex: none; height: 27px; display: flex; align-items: stretch; color: #fff; background: linear-gradient(90deg, #14252b 0, #14252b 556px, #3d4144 740px, #424242);`;
const StartButton = styled.button`width: 32px; display: flex; align-items: center; justify-content: center;`;
const SearchBox = styled.label`width: 229px; display: flex; align-items: center; gap: 8px; padding-left: 8px; background: #f3f3f3; color: #444; font-family: Roboto, sans-serif; font-size: 10px; input { flex: 1; min-width: 0; } input::placeholder { color: #444; opacity: 1; }`;
const TaskButton = styled.button`
  width: ${p => p.$w ?? 33}px; display: flex; align-items: center; justify-content: center; background: ${p => (p.$on ? '#4b5560' : 'none')}; border-bottom: 2px solid ${p => (p.$run ? '#76b9ed' : 'transparent')}; border-top: 2px solid transparent; position: relative;
`;
const Cursor = styled.span`position: absolute; left: 17px; top: 8px;`;
const Tray = styled.div`margin-left: auto; display: flex; align-items: center; font-size: 9px; button { display: flex; justify-content: center; align-items: center; height: 27px; }`;
const TrayButton = styled.button`width: ${p => p.$w}px; position: relative;`;
const Clock = styled.time`width: 48px; text-align: center; font-size: 8px; line-height: 12px; white-space: nowrap;`;
const Badge = styled.span`position: absolute; right: 7px; bottom: 3px; width: 10px; height: 10px; border: 1px solid #bbb; border-radius: 50%; background: #333; font-size: 7px; line-height: 8px;`;

const TaskbarView = () => (
  <Taskbar>
    <StartButton aria-label="Start"><Svg w={11}><path d="M0 1.500L5 1v4.200H0zM5.700.900L11 0v5.200H5.700zM0 6h5v4.300L0 9.600zM5.700 6H11v5l-5.300-.7z" fill="#fff" stroke="none" /></Svg></StartButton>
    <SearchBox><Svg w={11}><circle cx="6.500" cy="4.500" r="3.800" stroke="#333" /><path d="M4 7.500L.5 11" stroke="#333" /></Svg><input aria-label="Search" placeholder="Type here to search" /></SearchBox>
    <TaskButton $w={34} aria-label="Task view"><Svg w={11} h={12}><path d="M.5 0v2h6V0M.5 12v-2h6v2M.5 4h6v4h-6zM9.500 0v3M9.500 8v4M8.500 4.500h2v2h-2z" stroke="#fff" /></Svg></TaskButton>
    <TaskButton $run aria-label="Edge"><Svg w={14} vw={24} vh={24}><path d="M1 11C2 4 7 1 12.500 1 19 1 23 5.500 23 11v3H8.500c.5 4 3.500 5.500 7 5.500 2.500 0 4.500-.7 6-1.700v4.500c-2 1.200-4.500 1.700-7.500 1.700C8 24 3.500 20.500 3.500 14.500c0-4 2-6.500 5-8C4.500 7 2.500 9 1 11zm8-1h8.500c0-3-1.500-4.500-4-4.500S9.500 7.500 9 10z" fill="#1e88e5" stroke="none" /></Svg></TaskButton>
    <TaskButton $w={32} aria-label="File Explorer"><Svg w={15} h={14}><path d="M0 1h5l1 2h9v11H0z" fill="#e9b43a" stroke="none" /><path d="M1 3.500h13V13H1z" fill="#fbdf82" stroke="none" /><path d="M3 8h9v6H9.500v-3h-4v3H3z" fill="#45a1dc" stroke="none" /></Svg></TaskButton>
    <TaskButton aria-label="Store"><Svg w={15} h={16}><path d="M4.500 4V2a1 1 0 0 1 1-1h4a1 1 0 0 1 1 1v2" stroke="#fff" /><path d="M.5 4h14v11.500H.5z" fill="#fff" stroke="none" /><path d="M4 6.500h3v3H4z" fill="#e94f24" stroke="none" /><path d="M8 6.500h3v3H8z" fill="#7db928" stroke="none" /><path d="M4 10.500h3v3H4z" fill="#1ea0e6" stroke="none" /><path d="M8 10.500h3v3H8z" fill="#f7b50c" stroke="none" /></Svg></TaskButton>
    <TaskButton $w={32} aria-label="Mail"><Svg w={16} h={15}><path d="M0 5l8-5 8 5v10H0z" fill="#1480d0" stroke="none" /><path d="M2 4h12v6H2z" fill="#fff" stroke="none" /><path d="M0 5l8 5.500L16 5v10H0z" fill="#45b0ee" stroke="none" /></Svg></TaskButton>
    <TaskButton aria-label="Chrome"><Svg w={15} vw={24} vh={24}><circle cx="12" cy="12" r="12" fill="#fbc116" stroke="none" /><path d="M12 12L1.600 6A12 12 0 0 1 22.400 6z" fill="#ea4335" stroke="none" /><path d="M1.600 6L12 12v12A12 12 0 0 1 1.600 6z" fill="#34a853" stroke="none" /><path d="M12 6h10.400A12 12 0 0 1 12 24l5-9z" fill="#fbc116" stroke="none" /><circle cx="12" cy="12" r="5.500" fill="#4285f4" stroke="#fff" strokeWidth="1.500" /></Svg></TaskButton>
    <TaskButton $run aria-label="Excel"><ExcelLogo s={16} /></TaskButton>
    <TaskButton $w={32} aria-label="PowerPoint"><PptLogo s={16} /></TaskButton>
    <TaskButton $w={32} $on $run aria-label="Word"><WordLogo s={16} /><Cursor><Svg w={9} h={13}><path d="M.7.700l7.500 7.500H5l1.700 3.700-1.700.7-1.600-3.700L.7 11z" fill="#fff" stroke="#222" strokeWidth=".8" /></Svg></Cursor></TaskButton>
    <Tray>
      <TrayButton $w={16} aria-label="แสดงไอคอนที่ซ่อน"><ChevronUp w={9} c="#fff" /></TrayButton>
      <TrayButton $w={15} aria-label="ไมโครโฟน"><Svg w={8} h={12}><path d="M2.500 0h3v7h-3z" fill="#fff" stroke="#fff" /><path d="M.5 5v3h7V5M4 8v3.500" stroke="#fff" /></Svg></TrayButton>
      <TrayButton $w={19} aria-label="อัปเดต"><Svg w={13} h={12}><path d="M1 1.500h5M1 1v9h7M11 1v5M4 4h4M4 4v4h4V6" stroke="#eee" /><circle cx="9" cy="9" r="2.600" fill="#f59a23" stroke="none" /></Svg></TrayButton>
      <TrayButton $w={15} aria-label="Wi-Fi"><Svg w={10}><path d="M1 9.500A8.500 8.500 0 0 1 9.500 1M3.500 9.500a6 6 0 0 1 6-6M6 9.500a3.500 3.500 0 0 1 3.500-3.500" stroke="#bbb" /><circle cx="8.800" cy="9" r="1" fill="#fff" stroke="none" /></Svg></TrayButton>
      <TrayButton $w={14} aria-label="เสียง"><Svg w={11} h={10}><path d="M.5 3.500h2L5 1v8L2.500 6.500h-2z" stroke="#fff" /><path d="M6.500 3.500q1 1.500 0 3M8.300 2q2 3 0 6" stroke="#ddd" /></Svg></TrayButton>
      <TrayButton $w={25}>ENG</TrayButton>
      <Clock>18:03<br />20/4/2563</Clock>
      <TrayButton $w={33} aria-label="การแจ้งเตือน"><Svg w={12}><path d="M0 0h12v8.500H5L2.500 11V8.500H0z" fill="#fff" stroke="none" /><path d="M2 2.500h8M2 4.500h8M2 6.500h5" stroke="#444" strokeWidth=".8" /></Svg><Badge>2</Badge></TrayButton>
      <TrayButton $w={4} aria-label="Show desktop" />
    </Tray>
  </Taskbar>
);

export default function App() {
  return (
    <Screen>
      <GlobalStyle />
      <Desktop><Excel /><Word /></Desktop>
      <TaskbarView />
    </Screen>
  );
}
